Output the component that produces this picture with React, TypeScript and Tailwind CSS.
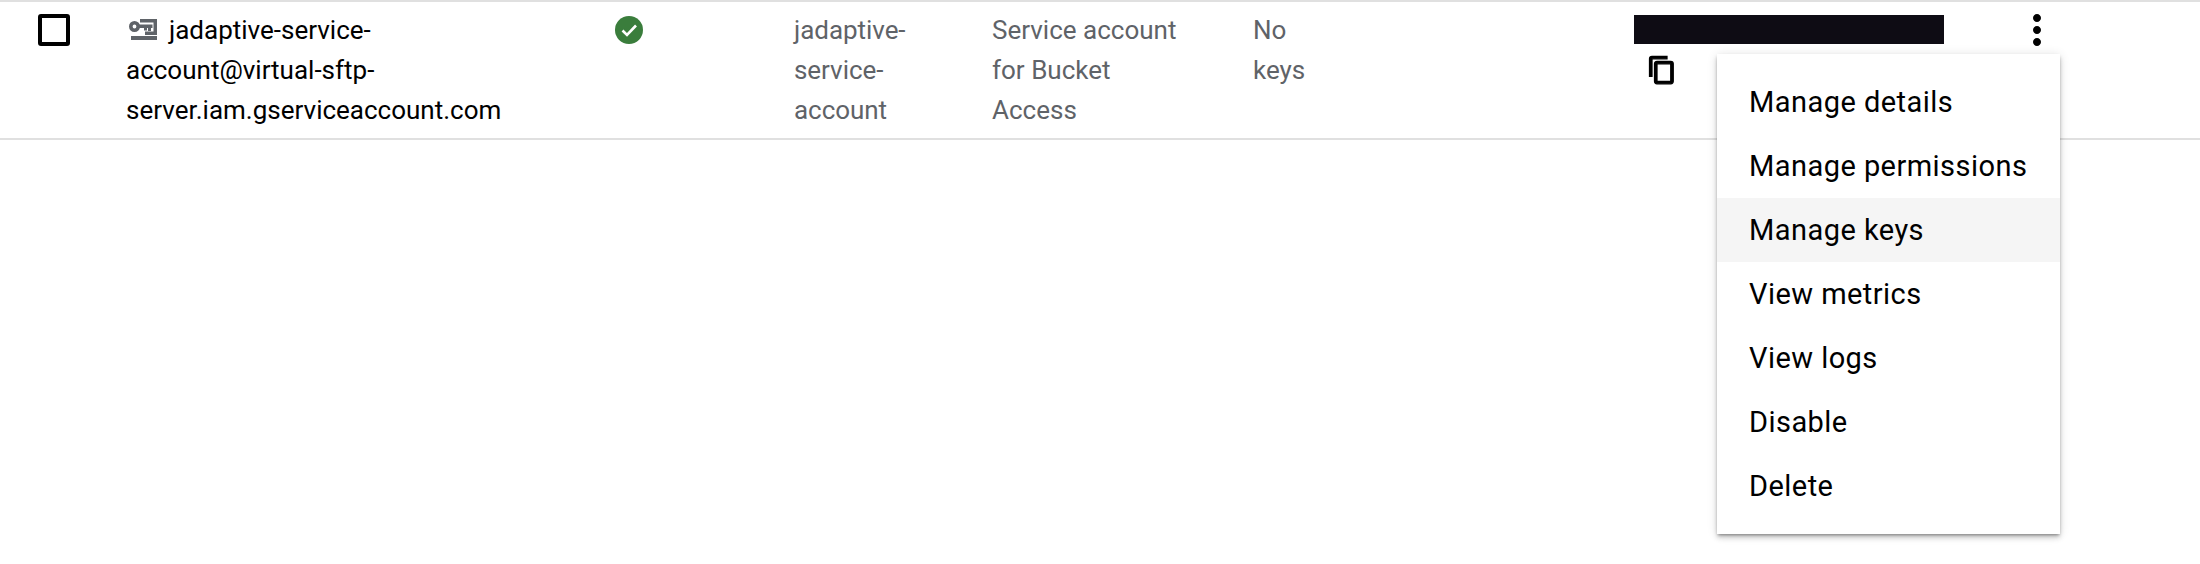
const menuItems = [
  'Manage details',
  'Manage permissions',
  'Manage keys',
  'View metrics',
  'View logs',
  'Disable',
  'Delete',
];

const KeyIcon = () => (
  <svg width="28" height="21" viewBox="0 0 28 21" fill="#5f6368" className="ml-[3px] mr-[12px] inline-block align-[-1px]">
    <path d="M11 0h17v16H16v-3.500h8.500v-9H11z" />
    <path fillRule="evenodd" d="M5.500 2a5.500 5.500 0 1 1 0 11 5.500 5.500 0 0 1 0-11zm0 3.600a1.900 1.900 0 1 0 0 3.800 1.900 1.900 0 0 0 0-3.800z" />
    <path d="M9 5.500h14.500V9H22v3h-3V9h-1v2.500h-3V9H9z" />
    <rect x="2" y="17" width="26" height="4" />
  </svg>
);

const CheckCircle = () => (
  <svg width="28" height="28" viewBox="0 0 28 28">
    <circle cx="14" cy="14" r="14" fill="#3a7d3c" />
    <path d="M7.500 14.500l4.500 4.500 9-9.500" fill="none" stroke="#fff" strokeWidth="2.600" />
  </svg>
);

const CopyIcon = () => (
  <svg width="30" height="30" viewBox="0 0 24 24" fill="#000" stroke="#000" strokeWidth="1">
    <path d="M16 1H4c-1.100 0-2 .9-2 2v14h2V3h12V1zm3 4H8c-1.100 0-2 .9-2 2v14c0 1.100.9 2 2 2h11c1.100 0 2-.9 2-2V7c0-1.100-.9-2-2-2zm0 16H8V7h11v14z" />
  </svg>
);

const MoreIcon = () => (
  <svg width="48" height="48" viewBox="0 0 24 24" fill="#000" className="-ml-px -mt-1">
    <path d="M12 8c1.100 0 2-.9 2-2s-.9-2-2-2-2 .9-2 2 .9 2 2 2zm0 2c-1.100 0-2 .9-2 2s.9 2 2 2 2-.9 2-2-.9-2-2-2zm0 6c-1.100 0-2 .9-2 2s.9 2 2 2 2-.9 2-2-.9-2-2-2z" />
  </svg>
);

export default function App() {
  return (
    <div className="relative h-[564px] w-[2200px] overflow-hidden bg-white font-['Roboto',sans-serif] text-[26px] leading-[40px]">
      <div className="flex h-[140px] border-y-2 border-[#e0e0e0] pl-[38px] pt-2">
        <div className="w-[88px] shrink-0 pt-1">
          <div className="h-8 w-8 rounded-[3px] border-4 border-black" />
        </div>
        <div className="w-[489px] shrink-0 pr-[80px] text-black">
          <KeyIcon />
          jadaptive-service-account@virtual-sftp-server.iam.gserviceaccount.com
        </div>
        <div className="w-[179px] shrink-0 pt-[6px]">
          <CheckCircle />
        </div>
        <div className="w-[198px] shrink-0 pr-[60px] tracking-[-0.05px] text-[#5f6368]">jadaptive-service-account</div>
        <div className="w-[261px] shrink-0 pr-[60px] text-[#5f6368]">Service account for Bucket Access</div>
        <div className="w-[381px] shrink-0 pr-[320px] text-[#5f6368]">No keys</div>
        <div className="w-[380px] shrink-0">
          <div className="mt-[5px] h-[29px] w-[310px] bg-[#0e0c14]" />
          <div className="ml-[13px] mt-[11px]">
            <CopyIcon />
          </div>
        </div>
        <MoreIcon />
      </div>
      <ul className="absolute left-[1717px] top-[54px] w-[343px] bg-white py-4 text-[29px] tracking-[0.45px] text-black shadow-[0_2px_3px_-1px_rgba(0,0,0,0.4),0_4px_5px_0_rgba(0,0,0,0.14),0_1px_10px_0_rgba(0,0,0,0.12)]">
        {menuItems.map((item) => (
          <li
            key={item}
            className={`flex h-16 items-center pl-8 ${item === 'Manage keys' ? 'bg-[#f5f5f5]' : ''}`}
          >
            {item}
          </li>
        ))}
      </ul>
    </div>
  );
}
